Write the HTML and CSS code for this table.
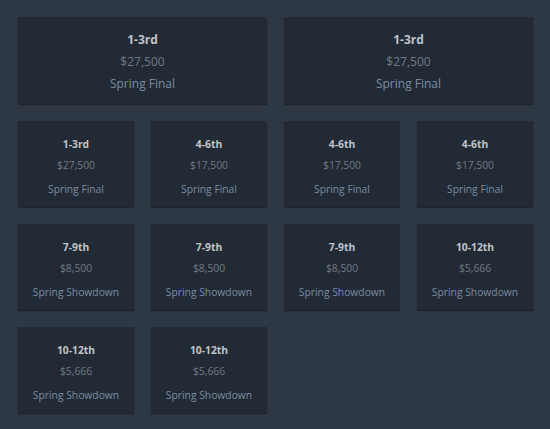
FILE: index.html
```html
<!DOCTYPE html>
<html>
<head>
<meta charset="utf-8">
<link rel="stylesheet" href="styles.css">
</head>
<body>
<div class="page">
  <div class="row row-lg">
    <div class="card card-lg"><div class="place">1-3rd</div><div class="prize">$27,500</div><div class="event">Spring Final</div></div>
    <div class="card card-lg"><div class="place">1-3rd</div><div class="prize">$27,500</div><div class="event">Spring Final</div></div>
  </div>
  <div class="row row-sm">
    <div class="card card-sm"><div class="place">1-3rd</div><div class="prize">$27,500</div><div class="event">Spring Final</div></div>
    <div class="card card-sm"><div class="place">4-6th</div><div class="prize">$17,500</div><div class="event">Spring Final</div></div>
    <div class="card card-sm"><div class="place">4-6th</div><div class="prize">$17,500</div><div class="event">Spring Final</div></div>
    <div class="card card-sm"><div class="place">4-6th</div><div class="prize">$17,500</div><div class="event">Spring Final</div></div>
    <div class="card card-sm"><div class="place">7-9th</div><div class="prize">$8,500</div><div class="event">Spring Showdown</div></div>
    <div class="card card-sm"><div class="place">7-9th</div><div class="prize">$8,500</div><div class="event">Spring Showdown</div></div>
    <div class="card card-sm"><div class="place">7-9th</div><div class="prize">$8,500</div><div class="event">Spring Showdown</div></div>
    <div class="card card-sm"><div class="place">10-12th</div><div class="prize">$5,666</div><div class="event">Spring Showdown</div></div>
    <div class="card card-sm"><div class="place">10-12th</div><div class="prize">$5,666</div><div class="event">Spring Showdown</div></div>
    <div class="card card-sm"><div class="place">10-12th</div><div class="prize">$5,666</div><div class="event">Spring Showdown</div></div>
  </div>
</div>
</body>
</html>
```
FILE: styles.css
```css
html, body {
  margin: 0;
  padding: 0;
  background: #2e3744;
  height: 100%;
}
body {
  font-family: "Open Sans", "DejaVu Sans", sans-serif;
}
.page {
  padding: 17px 17px 0 18px;
}
.row {
  display: grid;
  column-gap: 17px;
  row-gap: 17px;
}
.row-lg {
  grid-template-columns: 249px 249px;
  margin-bottom: 17px;
}
.row-sm {
  grid-template-columns: repeat(4, 116px);
}
.card {
  background: #222a35;
  box-shadow: 0 1px 1px rgba(0, 0, 0, 0.35);
  text-align: center;
  display: flex;
  flex-direction: column;
  align-items: center;
}
.card-lg {
  height: 87px;
  padding-top: 12px;
  box-sizing: border-box;
}
.card-sm {
  height: 86px;
  padding-top: 12px;
  box-sizing: border-box;
}
.place {
  color: #c0c3c7;
  font-weight: 700;
}
.prize {
  color: #737a84;
}
.event {
  color: #7b8ca3;
}
.card-lg .place,
.card-lg .prize,
.card-lg .event {
  font-size: 12px;
  line-height: 22px;
}
.card-lg .prize {
  margin-top: -0.5px;
}
.card-lg .event {
  margin-top: 0.5px;
}
.card-sm .place,
.card-sm .prize,
.card-sm .event {
  font-size: 10.3px;
  line-height: 22px;
}
.card-sm .prize {
  margin-top: -1px;
}
.card-sm .event {
  margin-top: 2px;
}
```
